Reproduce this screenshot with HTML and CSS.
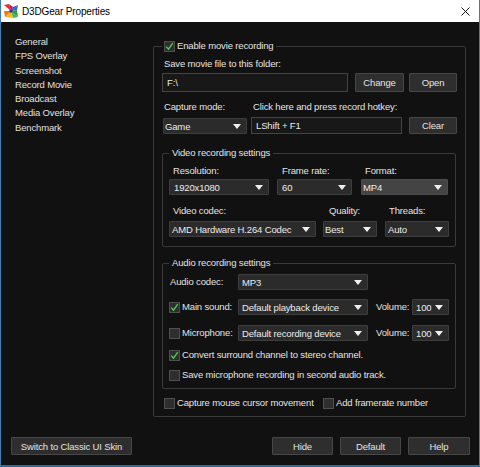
FILE: index.html
```html
<!DOCTYPE html>
<html>
<head>
<meta charset="utf-8">
<link rel="stylesheet" href="styles.css">
</head>
<body>
<div class="window">
  <div class="titlebar">
    <svg class="logo" width="14" height="14" viewBox="0 0 14 14">
      <polygon points="7,7 0,1 5,0" fill="#e02f2f"/>
      <polygon points="7,7 5,0 9,3" fill="#b8205a"/>
      <polygon points="7,7 14,1 13,6" fill="#2e64d6"/>
      <polygon points="7,7 9,3 14,1" fill="#4d3fc0"/>
      <polygon points="7,7 13,6 14,13" fill="#2f9a3e"/>
      <polygon points="7,7 14,13 9,14" fill="#46b84e"/>
      <polygon points="7,7 9,14 1,13" fill="#f0b82a"/>
      <polygon points="7,7 1,13 0,7" fill="#e87a22"/>
      <rect x="5.5" y="5.5" width="3" height="3" fill="#3a2a9a"/>
    </svg>
    <span class="title">D3DGear Properties</span>
    <svg class="close" width="9" height="9" viewBox="0 0 9 9">
      <path d="M0.5 0.5 L8.5 8.5 M8.5 0.5 L0.5 8.5" stroke="#111" stroke-width="1" fill="none"/>
    </svg>
  </div>
  <div class="client">
    <div class="top">
      <nav class="nav">
        <div class="nav-item">General</div>
        <div class="nav-item">FPS Overlay</div>
        <div class="nav-item">Screenshot</div>
        <div class="nav-item">Record Movie</div>
        <div class="nav-item">Broadcast</div>
        <div class="nav-item">Media Overlay</div>
        <div class="nav-item">Benchmark</div>
      </nav>
      <fieldset class="group main">
        <legend class="legend legend-main"><span class="cb on"><svg width="9" height="9" viewBox="0 0 9 9"><path d="M1.2 4.6 L3.5 7.2 L7.8 1.2" stroke="#4fcf4f" stroke-width="1.4" fill="none"/></svg></span><span class="cb-text">Enable movie recording</span></legend>
        <div class="lbl">Save movie file to this folder:</div>
        <div class="row row1">
          <div class="input w-folder">F:\</div>
          <div class="btn w-change">Change</div>
          <div class="btn w-open">Open</div>
        </div>
        <div class="lblrow">
          <span class="lbl lbl-cap">Capture mode:</span>
          <span class="lbl lbl-hot">Click here and press record hotkey:</span>
        </div>
        <div class="row row2">
          <div class="sel w-game pad1"><span>Game</span><i class="tri"></i></div>
          <div class="input w-hotkey">LShift + F1</div>
          <div class="btn w-clear">Clear</div>
        </div>

        <fieldset class="group sub video">
          <legend class="legend legend-sub">Video recording settings</legend>
          <div class="vrow">
            <div class="cell w-res"><div class="clbl pl4">Resolution:</div><div class="sel pad4"><span>1920x1080</span><i class="tri"></i></div></div>
            <div class="cell w-fr"><div class="clbl pl5">Frame rate:</div><div class="sel pad4"><span>60</span><i class="tri"></i></div></div>
            <div class="cell w-fmt"><div class="clbl pl4">Format:</div><div class="sel sel-hi pad1"><span>MP4</span><i class="tri"></i></div></div>
          </div>
          <div class="vrow vrow2">
            <div class="cell w-codec"><div class="clbl pl4 gap4">Video codec:</div><div class="sel pad2"><span>AMD Hardware H.264 Codec</span><i class="tri"></i></div></div>
            <div class="cell w-q"><div class="clbl pl6 gap4">Quality:</div><div class="sel pad1"><span>Best</span><i class="tri"></i></div></div>
            <div class="cell w-th"><div class="clbl pl4 gap4">Threads:</div><div class="sel pad2"><span>Auto</span><i class="tri"></i></div></div>
          </div>
        </fieldset>

        <fieldset class="group sub audio">
          <legend class="legend legend-sub">Audio recording settings</legend>
          <div class="arow">
            <div class="acell"><span class="lbl-in pl1">Audio codec:</span></div>
            <div class="sel w-asel pad3"><span>MP3</span><i class="tri"></i></div>
          </div>
          <div class="arow arow-gap9">
            <div class="acell"><span class="cb on"><svg width="9" height="9" viewBox="0 0 9 9"><path d="M1.2 4.6 L3.5 7.2 L7.8 1.2" stroke="#4fcf4f" stroke-width="1.4" fill="none"/></svg></span><span class="lbl-in">Main sound:</span></div>
            <div class="sel w-asel pad3"><span>Default playback device</span><i class="tri"></i></div>
            <span class="lbl-in vol">Volume:</span>
            <div class="sel w-vol pad3"><span>100</span><i class="tri"></i></div>
          </div>
          <div class="arow arow-gap10">
            <div class="acell"><span class="cb"></span><span class="lbl-in">Microphone:</span></div>
            <div class="sel w-asel pad3"><span>Default recording device</span><i class="tri"></i></div>
            <span class="lbl-in vol">Volume:</span>
            <div class="sel w-vol pad3"><span>100</span><i class="tri"></i></div>
          </div>
          <div class="crow">
            <span class="cb on"><svg width="9" height="9" viewBox="0 0 9 9"><path d="M1.2 4.6 L3.5 7.2 L7.8 1.2" stroke="#4fcf4f" stroke-width="1.4" fill="none"/></svg></span><span class="lbl-in">Convert surround channel to stereo channel.</span>
          </div>
          <div class="crow">
            <span class="cb"></span><span class="lbl-in">Save microphone recording in second audio track.</span>
          </div>
        </fieldset>

        <div class="mrow">
          <div class="mcell"><span class="cb"></span><span class="lbl-in">Capture mouse cursor movement</span></div>
          <div class="mcell2"><span class="cb"></span><span class="lbl-in">Add framerate number</span></div>
        </div>
      </fieldset>
    </div>
    <div class="footer">
      <div class="btn fbtn w-switch">Switch to Classic UI Skin</div>
      <div class="fright">
        <div class="btn fbtn w-hide">Hide</div>
        <div class="btn fbtn w-default">Default</div>
        <div class="btn fbtn w-help">Help</div>
      </div>
    </div>
  </div>
</div>
</body>
</html>
```

FILE: styles.css
```css
* { box-sizing: border-box; }
html, body { margin: 0; padding: 0; }
body {
  width: 480px;
  height: 467px;
  overflow: hidden;
  background: #111;
  font-family: "Liberation Sans", Arial, sans-serif;
  font-size: 9.5px;
  letter-spacing: -0.15px;
  color: #e4e4e4;
}
.window {
  width: 480px;
  height: 467px;
  display: flex;
  flex-direction: column;
  border-left: 1px solid #3f7db0;
  border-right: 1px solid #3f7db0;
  border-bottom: 2px solid #2f6a98;
}
.titlebar {
  height: 22px;
  flex: none;
  background: #fff;
  display: flex;
  align-items: center;
}
.logo { margin-left: 3px; flex: none; }
.title {
  margin-left: 4px;
  font-size: 10px;
  letter-spacing: -0.15px;
  color: #000;
}
.close { margin-left: auto; margin-right: 9px; margin-top: 0; }
.client {
  flex: 1;
  background: #111111;
  display: flex;
  flex-direction: column;
}
.top { display: flex; align-items: flex-start; }
.nav {
  width: 152px;
  flex: none;
  padding: 13px 0 0 14px;
}
.nav-item { line-height: 14.3px; color: #e0e0e0; }

.group {
  margin: 0;
  min-width: 0;
  border: 1px solid #3a3a3a;
  border-radius: 2px;
}
.main {
  margin-top: 17px;
  width: 313px;
  padding: 5px 8px 7px 8px;
}
.legend {
  line-height: 14px;
  height: 14px;
  display: flex;
  align-items: center;
}
.legend-main { padding: 0 2px; }
.legend-sub { padding: 0 3px; }
.cb {
  width: 11px;
  height: 11px;
  flex: none;
  background: #2e2e2e;
  border: 1px solid #505050;
  display: inline-flex;
  align-items: center;
  justify-content: center;
  margin-right: 2px;
}
.cb-text { line-height: 14px; }

.lbl { line-height: 12px; padding-left: 2px; display: block; }
.row { display: flex; }
.row1 { margin-top: 3px; height: 19px; }
.lblrow { display: flex; margin-top: 9px; }
.lbl-cap { width: 91px; flex: none; }
.lbl-hot { padding-left: 0; }
.row2 { margin-top: 4px; height: 17px; align-items: flex-start; }

.input {
  background: #181818;
  border: 1px solid #444;
  display: flex;
  align-items: center;
  padding-left: 4px;
  color: #eaeaea;
}
.btn {
  background: #2e2e2e;
  border: 1px solid #474747;
  display: flex;
  align-items: center;
  justify-content: center;
  color: #e4e4e4;
  border-radius: 1px;
}
.w-folder { width: 186px; }
.w-change { width: 49px; margin-left: 7px; }
.w-open { width: 48px; margin-left: 5px; }
.w-game { width: 84px; height: 16px; margin-left: 1px; margin-top: 1px; }
.w-hotkey { width: 151px; height: 17px; margin-left: 4px; }
.w-clear { width: 48px; height: 17px; margin-left: 7px; }

.sel {
  height: 16px;
  background: #2b2b2b;
  border: 1px solid #3e3e3e;
  display: flex;
  align-items: center;
  justify-content: space-between;
  padding-right: 5px;
  color: #ececec;
  white-space: nowrap;
  border-radius: 1px;
}
.sel-hi { background: #444; border-color: #4c4c4c; }
.pad1 { padding-left: 1px; }
.pad2 { padding-left: 2px; }
.pad3 { padding-left: 3px; }
.pad4 { padding-left: 4px; }
.tri {
  width: 0;
  height: 0;
  border-left: 4px solid transparent;
  border-right: 4px solid transparent;
  border-top: 5px solid #f0f0f0;
  flex: none;
}

.sub {
  margin-right: 1px;
  padding: 5px 6px 9px 6px;
}
.video { margin-top: 12px; }
.vrow { display: flex; }
.vrow2 { margin-top: 10px; }
.cell { display: flex; flex-direction: column; flex: none; }
.clbl { line-height: 12px; margin-bottom: 2px; }
.gap4 { margin-bottom: 4px; }
.pl4 { padding-left: 4px; }
.pl5 { padding-left: 5px; }
.pl6 { padding-left: 6px; }
.pl1 { padding-left: 1px; }
.w-res { width: 100px; }
.w-fr { width: 75px; margin-left: 8px; }
.w-fmt { width: 87px; margin-left: 9px; }
.w-codec { width: 147px; }
.w-q { width: 54px; margin-left: 7px; }
.w-th { width: 64px; margin-left: 8px; }

.audio { margin-top: 9px; padding: 4px 6px 7px 6px; }
.arow { display: flex; align-items: center; height: 16px; }
.arow-gap9 { margin-top: 9px; }
.arow-gap10 { margin-top: 10px; }
.acell { width: 69px; flex: none; display: flex; align-items: center; }
.lbl-in { line-height: 12px; white-space: nowrap; }
.w-asel { width: 130px; flex: none; }
.vol { margin-left: 8px; width: 36px; flex: none; }
.w-vol { width: 37px; flex: none; }
.crow { display: flex; align-items: center; height: 12px; margin-top: 8px; }

.mrow { display: flex; align-items: center; height: 12px; margin-top: 8px; padding-left: 2px; }
.mcell { width: 159px; flex: none; display: flex; align-items: center; }
.mcell2 { display: flex; align-items: center; }

.footer {
  display: flex;
  margin-top: 20px;
  padding: 0 9px 0 10px;
}
.fbtn { height: 18px; }
.fright { display: flex; margin-left: auto; }
.w-switch { width: 121px; }
.w-hide { width: 61px; }
.w-default { width: 61px; margin-left: 7px; }
.w-help { width: 62px; margin-left: 7px; }
```
